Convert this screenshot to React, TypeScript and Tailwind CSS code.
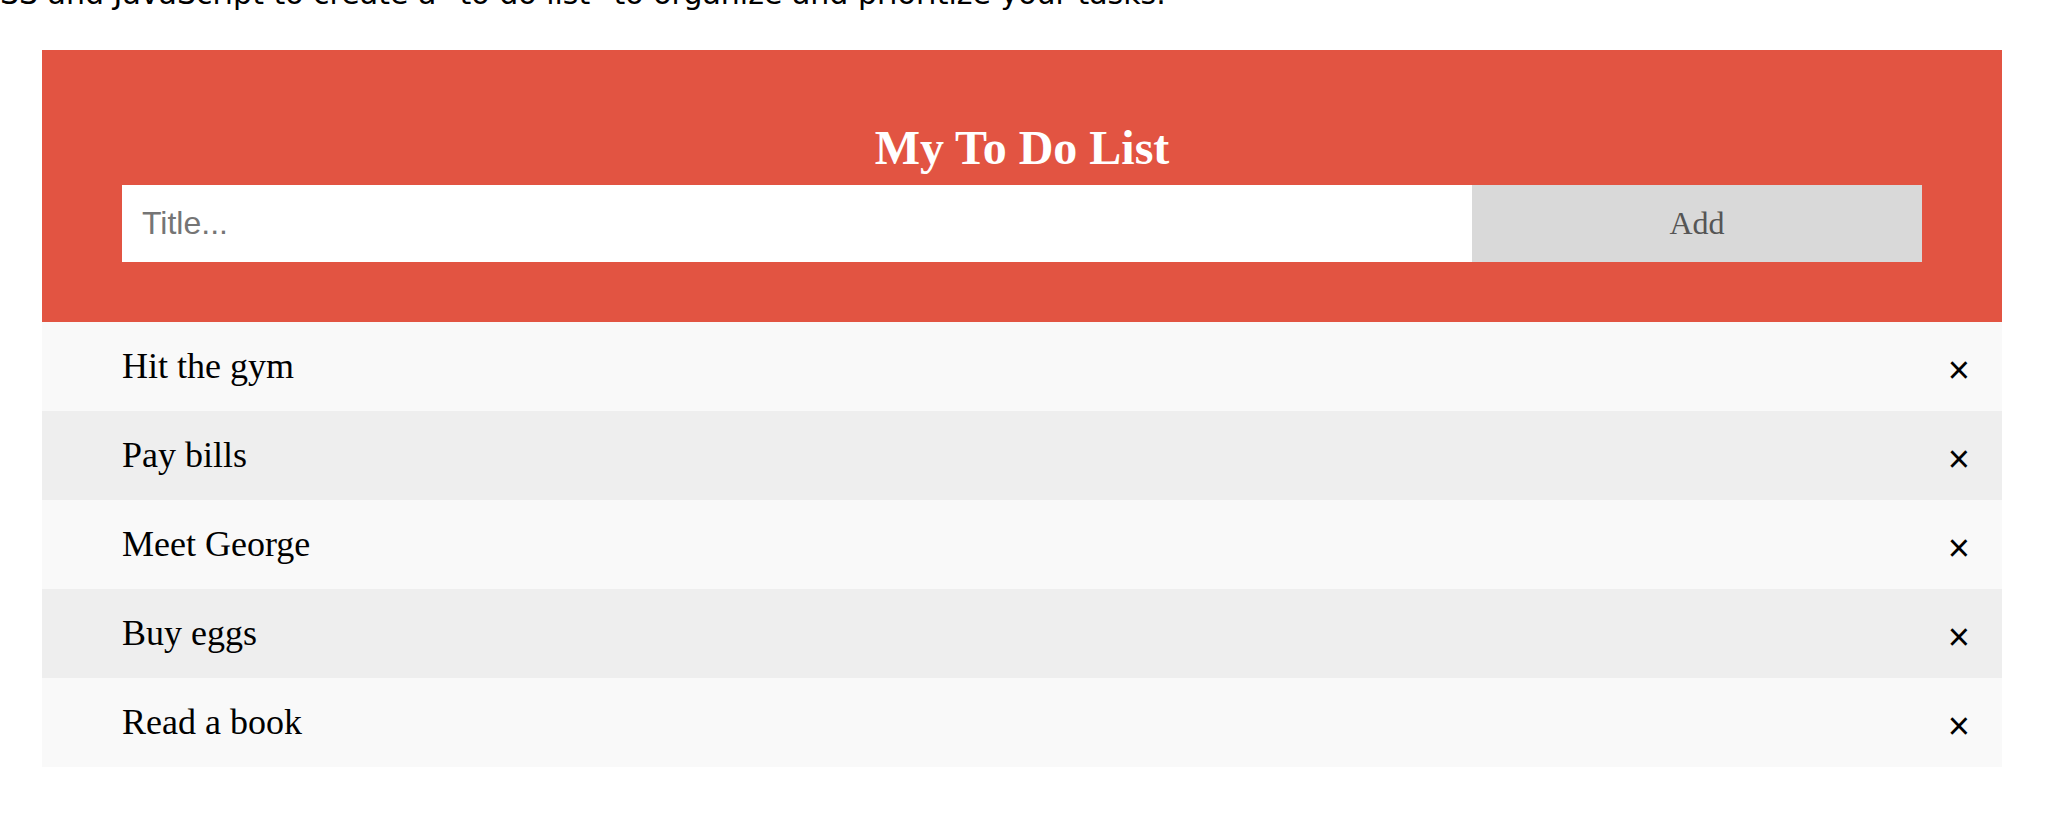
import React from 'react';

const todos = ['Hit the gym', 'Pay bills', 'Meet George', 'Buy eggs', 'Read a book'];

export default function App() {
  return (
    <div className="min-h-screen bg-white text-black font-['Liberation_Serif',serif]">
      {/* intro line, cut off by the top of the page */}
      <div className="h-[50px] overflow-hidden">
        <p className="-mt-[23px] -ml-[21px] whitespace-nowrap font-['DejaVu_Sans',sans-serif] text-[30px] leading-[1.164] text-[#000]">
          CSS and JavaScript to create a "to do list" to organize and prioritize your tasks.
        </p>
      </div>

      <div className="ml-[42px] w-[1960px]">
        {/* Header */}
        <div className="bg-[#e25442] px-[80px] py-[60px] text-center text-white">
          <h2 className="my-[10px] text-[48px] font-bold leading-[1.15]">My To Do List</h2>
          <div className="flex">
            <input
              type="text"
              placeholder="Title..."
              className="w-3/4 bg-white p-[20px] font-['Liberation_Sans',sans-serif] text-[32px] leading-[1.15] text-black placeholder:text-[#757575] outline-none"
            />
            <span className="w-1/4 cursor-pointer bg-[#d9d9d9] p-[20px] text-center text-[32px] leading-[1.15] text-[#555]">
              Add
            </span>
          </div>
        </div>

        {/* List */}
        <ul>
          {todos.map((t, i) => (
            <li
              key={t}
              className={`flex items-start justify-between py-[24px] pl-[80px] pr-[32px] text-[36px] leading-[41px] ${
                i % 2 === 0 ? 'bg-[#f9f9f9]' : 'bg-[#eeeeee]'
              }`}
            >
              <span>{t}</span>
              <span className="box-border h-[41px] overflow-visible pt-[4px] font-['Liberation_Sans',sans-serif] text-[38px] leading-[41px]">
                ×
              </span>
            </li>
          ))}
        </ul>
      </div>
    </div>
  );
}
